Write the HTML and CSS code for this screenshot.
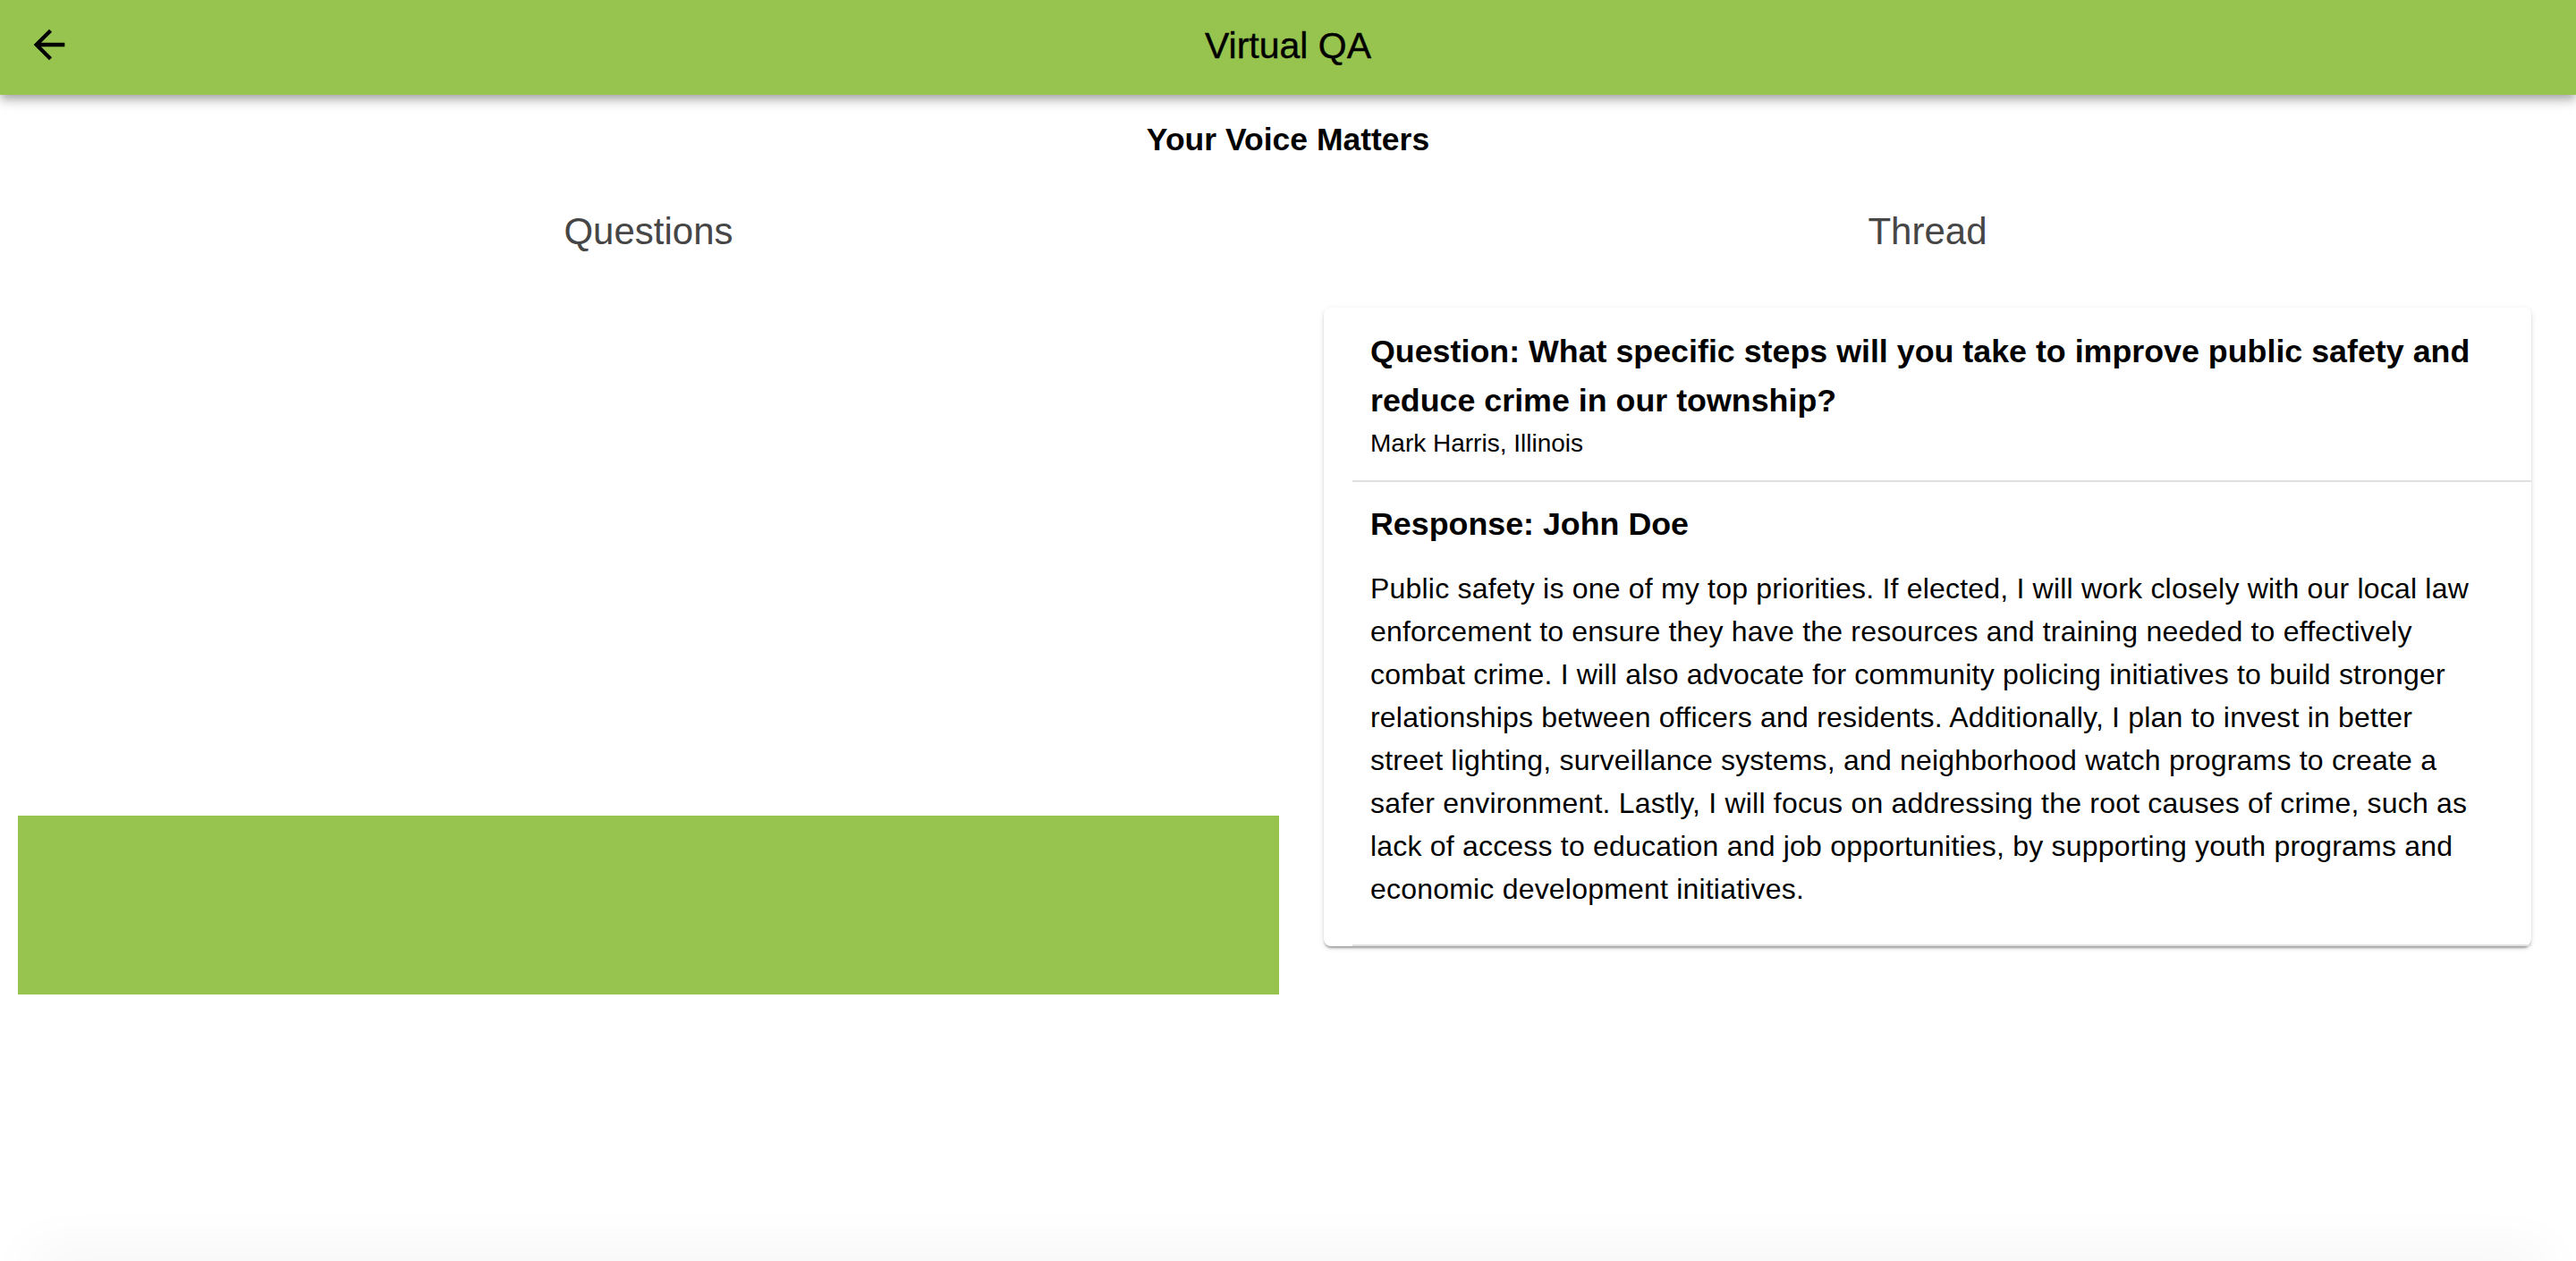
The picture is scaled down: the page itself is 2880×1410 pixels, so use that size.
FILE: index.html
```html
<!DOCTYPE html>
<html lang="en">
<head>
<meta charset="utf-8">
<title>Virtual QA</title>
<link rel="stylesheet" href="styles.css">
</head>
<body>
<header class="appbar">
  <button class="back-btn" aria-label="Back">
    <svg class="back-icon" viewBox="0 0 24 24" width="52" height="52" aria-hidden="true">
      <path d="M20 11H7.83l5.59-5.59L12 4l-8 8 8 8 1.41-1.41L7.83 13H20v-2z" fill="#000"/>
    </svg>
  </button>
  <div class="appbar-title">Virtual QA</div>
  <div class="appbar-spacer"></div>
</header>

<main class="page">
  <h1 class="page-title">Your Voice Matters</h1>
  <div class="columns">
    <section class="col">
      <h2 class="col-title">Questions</h2>
      <div class="question-list"></div>
      <div class="compose"></div>
    </section>
    <section class="col">
      <h2 class="col-title">Thread</h2>
      <div class="card">
        <ul class="thread-list">
          <li class="thread-item">
            <p class="item-heading">Question: What specific steps will you take to improve public safety and reduce crime in our township?</p>
            <p class="item-author">Mark Harris, Illinois</p>
          </li>
          <li class="thread-item response">
            <p class="item-heading">Response: John Doe</p>
            <p class="item-body">Public safety is one of my top priorities. If elected, I will work closely with our local law enforcement to ensure they have the resources and training needed to effectively combat crime. I will also advocate for community policing initiatives to build stronger relationships between officers and residents. Additionally, I plan to invest in better street lighting, surveillance systems, and neighborhood watch programs to create a safer environment. Lastly, I will focus on addressing the root causes of crime, such as lack of access to education and job opportunities, by supporting youth programs and economic development initiatives.</p>
          </li>
        </ul>
      </div>
    </section>
  </div>
</main>
<div class="bottom-shade"></div>
</body>
</html>
```

FILE: styles.css
```css
* {
  box-sizing: border-box;
}

html, body {
  margin: 0;
  padding: 0;
  background: #ffffff;
}

body {
  font-family: "Liberation Sans", Arial, Helvetica, sans-serif;
  color: #000;
  min-height: 1410px;
}

.appbar {
  height: 106px;
  background: #97c34f;
  display: grid;
  grid-template-columns: 1fr auto 1fr;
  align-items: start;
  box-shadow: 0 4px 8px -2px rgba(0, 0, 0, 0.2),
              0 8px 10px 0 rgba(0, 0, 0, 0.14),
              0 2px 20px 0 rgba(0, 0, 0, 0.12);
  position: relative;
  z-index: 2;
}

.back-btn {
  justify-self: start;
  margin: 24px 0 0 29px;
  padding: 0;
  border: 0;
  background: transparent;
  width: 52px;
  height: 52px;
  display: block;
}

.back-icon {
  display: block;
}

.appbar-title {
  font-size: 41px;
  line-height: 46px;
  padding-top: 28px;
  font-weight: 400;
  color: #000;
  white-space: nowrap;
  -webkit-text-stroke: 0.4px #000;
}

.page {
  padding: 0;
}

.page-title {
  margin: 30px 0 0;
  font-size: 35.5px;
  line-height: 40px;
  font-weight: 700;
  text-align: center;
}

.columns {
  display: grid;
  grid-template-columns: 1fr 1fr;
  column-gap: 20px;
  padding: 0 20px;
  margin-top: 59px;
}

.col {
  min-width: 0;
}

.col-title {
  margin: 0;
  font-size: 42px;
  line-height: 48px;
  font-weight: 400;
  color: #464646;
  text-align: center;
}

.question-list {
  height: 629px;
}

.compose {
  height: 200px;
  background: #97c34f;
}

.card {
  margin: 61px 30px 0;
  background: #fff;
  border-radius: 8px;
  padding-left: 32px;
  box-shadow: 0 4px 3px -2px rgba(0, 0, 0, 0.2),
              0 2px 2px 0 rgba(0, 0, 0, 0.14),
              0 2px 6px 0 rgba(0, 0, 0, 0.12);
}

.thread-list {
  list-style: none;
  margin: 0;
  padding: 0;
}

.thread-item {
  padding: 22px 52px 21px 20px;
  border-bottom: 2px solid #e0e0e0;
}

.thread-item.response {
  padding-top: 20px;
  padding-bottom: 38px;
}

.item-heading {
  margin: 0;
  font-size: 35.8px;
  line-height: 55px;
  font-weight: 700;
}

.item-author {
  margin: 0;
  font-size: 28px;
  line-height: 40px;
}

.item-body {
  margin: 20px 0 0;
  font-size: 32px;
  line-height: 48px;
  letter-spacing: 0.2px;
}

.bottom-shade {
  position: fixed;
  left: 40px;
  right: 40px;
  bottom: -20px;
  height: 20px;
  border-radius: 40px;
  box-shadow: 0 0 60px 10px rgba(0, 0, 0, 0.05);
}
```
